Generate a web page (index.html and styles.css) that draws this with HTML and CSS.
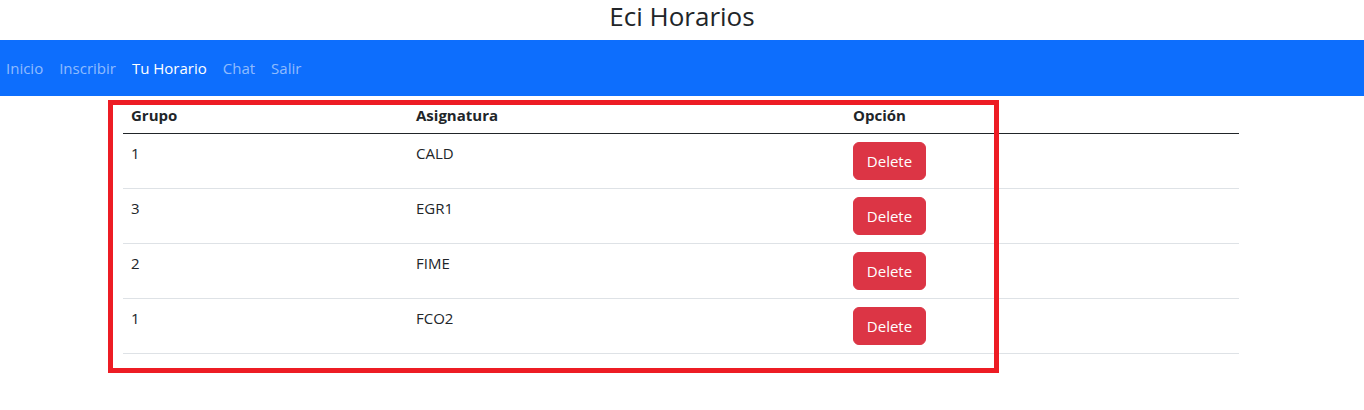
FILE: index.html
```html
<!DOCTYPE html>
<html lang="es">
<head>
<meta charset="utf-8">
<title>Eci Horarios</title>
<link rel="stylesheet" href="styles.css">
</head>
<body>
<h3 class="title">Eci Horarios</h3>
<nav class="navbar">
  <a class="nav-link" href="#">Inicio</a>
  <a class="nav-link" href="#">Inscribir</a>
  <a class="nav-link active" href="#">Tu Horario</a>
  <a class="nav-link" href="#">Chat</a>
  <a class="nav-link" href="#">Salir</a>
</nav>
<main class="content">
  <table class="table">
    <colgroup>
      <col class="col-grupo">
      <col class="col-asig">
      <col>
    </colgroup>
    <thead>
      <tr><th>Grupo</th><th>Asignatura</th><th>Opción</th></tr>
    </thead>
    <tbody>
      <tr><td>1</td><td>CALD</td><td><button class="btn-danger" type="button">Delete</button></td></tr>
      <tr><td>3</td><td>EGR1</td><td><button class="btn-danger" type="button">Delete</button></td></tr>
      <tr><td>2</td><td>FIME</td><td><button class="btn-danger" type="button">Delete</button></td></tr>
      <tr><td>1</td><td>FCO2</td><td><button class="btn-danger" type="button">Delete</button></td></tr>
    </tbody>
  </table>
</main>
<div class="highlight"></div>
</body>
</html>
```
FILE: styles.css
```css
* { box-sizing: border-box; }
body {
  margin: 0;
  font-family: "Open Sans", "Noto Sans", sans-serif;
  font-size: 15px;
  line-height: 24px;
  color: #212529;
  background: #fff;
}
.title {
  margin: 0;
  padding-bottom: 6.4px;
  font-size: 26px;
  font-weight: 500;
  line-height: 33.6px;
  text-align: center;
}
.navbar {
  display: flex;
  align-items: center;
  gap: 16px;
  height: 56px;
  padding-left: 6px;
  background: #0d6efd;
}
.nav-link {
  color: rgba(255, 255, 255, 0.55);
  text-decoration: none;
}
.nav-link.active { color: #fff; }
.content {
  padding: 0 125px 0 123px;
}
.table {
  width: 100%;
  border-collapse: collapse;
  table-layout: fixed;
}
.col-grupo { width: 285px; }
.col-asig { width: 437px; }
.table th {
  text-align: left;
  font-weight: 700;
  padding: 7px 8px 6px;
  border-bottom: 1px solid #212529;
}
.table td {
  vertical-align: top;
  padding: 7px 8px 9px;
  border-bottom: 1px solid #dee2e6;
}
.btn-danger {
  display: block;
  width: 73px;
  height: 38px;
  margin-top: 1px;
  margin-bottom: -1px;
  padding: 0;
  border: 1px solid #dc3545;
  border-radius: 6px;
  background: #dc3545;
  color: #fff;
  font-family: inherit;
  font-size: 15px;
  line-height: 24px;
}
.highlight {
  position: absolute;
  left: 108px;
  top: 100px;
  width: 891px;
  height: 273px;
  border: 5px solid #ed1c24;
  pointer-events: none;
}
```
